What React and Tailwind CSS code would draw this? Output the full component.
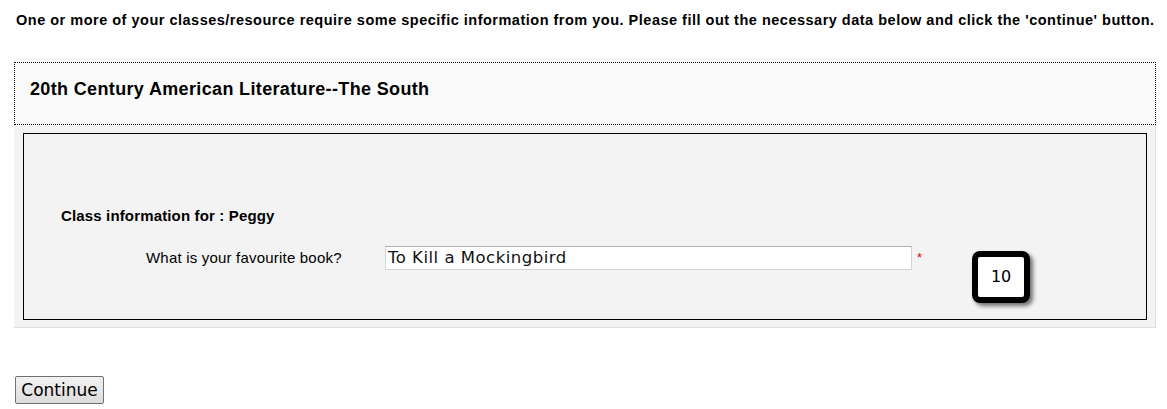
export default function App() {
  return (
    <div className="font-['Liberation_Sans',Arial,sans-serif] text-black bg-white min-h-[409px]">
      <p className="pl-[16px] pt-[12px] text-[14.5px] tracking-[0.5px] leading-[16px] font-bold whitespace-nowrap">
        One or more of your classes/resource require some specific information from you. Please fill out the necessary data below and click the 'continue' button.
      </p>
      <div className="ml-[14px] mt-[34px] w-[1142px]">
        <div className="h-[63px] border border-dotted border-black bg-[#fafafa] pl-[15px] pt-[16px]">
          <h2 className="text-[18px] tracking-[0.35px] font-bold leading-[20px]">20th Century American Literature--The South</h2>
        </div>
        <div className="bg-[#f3f3f3] border-r border-b border-[#dedede] pl-[9px] pr-[8px] pt-[8px] pb-[7px]">
          <div className="border border-black h-[187px] pl-[37px] pt-[73px]">
            <div className="text-[15px] tracking-[0.15px] font-bold leading-[17px]">Class information for : Peggy</div>
            <div className="flex items-start mt-[22px]">
              <div className="w-[324px] pl-[85px] pt-[3px] text-[15px] tracking-[0.2px] leading-[17px] whitespace-nowrap">What is your favourite book?</div>
              <div className="w-[527px] h-[24px] bg-white border border-[#d4d4d4] border-t-[#b0b0b8] flex items-center pl-[2px] font-['DejaVu_Sans',Verdana,sans-serif] text-[16.5px] tracking-[0.5px] text-[#111] whitespace-nowrap">
                To Kill a Mockingbird
              </div>
              <span className="ml-[5px] mt-[5px] text-red-600 text-[13px] leading-[14px]">*</span>
              <div className="ml-[50px] mt-[5px] w-[58px] h-[52px] border-[6px] border-black rounded-[8px] bg-white shadow-[3px_3px_4px_rgba(0,0,0,0.55)] flex items-center justify-center font-['DejaVu_Sans',Verdana,sans-serif] text-[16px]">
                10
              </div>
            </div>
          </div>
        </div>
      </div>
      <div className="pl-[15px] mt-[48px]">
        <button className="h-[28px] w-[89px] border border-[#707070] rounded-[2px] bg-gradient-to-b from-[#f2f2f2] to-[#dcdcdc] font-['DejaVu_Sans',Verdana,sans-serif] text-[17px] leading-[20px] text-black">
          Continue
        </button>
      </div>
    </div>
  );
}
